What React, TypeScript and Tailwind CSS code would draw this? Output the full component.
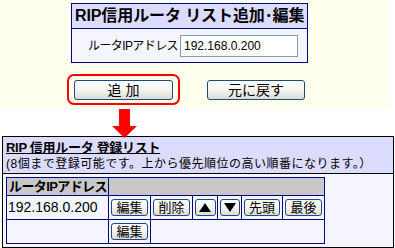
import type { ReactNode } from 'react'

// XP風ボタン
const XpButton = ({ children, className = '' }: { children: ReactNode; className?: string }) => (
  <button
    className={`flex items-center justify-center rounded-[3px] border border-[#1c4a7c] bg-linear-to-b from-white via-[#f4f4f0] to-[#dcdcd4] text-black leading-none ${className}`}
  >
    {children}
  </button>
)

const Tri = ({ down = false }: { down?: boolean }) => (
  <svg width="12" height="11" viewBox="0 0 12 11">
    <polygon points={down ? '0,1 12,1 6,10' : '6,1 12,10 0,10'} fill="#000" />
  </svg>
)

export default function App() {
  return (
    <div className="w-[395px] h-[248px] overflow-hidden bg-white text-black font-['Liberation_Sans','Noto_Sans_CJK_JP',sans-serif]">
      {/* 上部: 追加・編集フォーム */}
      <div className="w-[389px] h-[108px] bg-[#ffffee] pt-[3px]">
        <div className="ml-[71px] w-[237px] border border-[#000080]">
          <div className="h-[25px] bg-[#dcdcff] border-b border-[#000080] flex items-center pl-[3px] text-[16px] font-bold tracking-[-0.1px]">
            RIP信用ルータ リスト追加･編集
          </div>
          <div className="h-[33px] bg-[#f5f5ff] flex items-center pl-[16px]">
            <span className="w-[92px] text-[12px] tracking-[-0.6px] whitespace-nowrap">ルータIPアドレス</span>
            <input
              defaultValue="192.168.0.200"
              className="w-[118px] h-[22px] border border-[#7f9db9] bg-white px-[3px] text-[12px] outline-none"
            />
          </div>
        </div>

        <div className="mt-[11px] flex items-start">
          <div className="ml-[67px] w-[113px] h-[31px] border-2 border-[#ff0000] rounded-[7px] pl-[5px] pt-[4px]">
            <XpButton className="w-[99px] h-[20px] text-[14px]">追&nbsp;加</XpButton>
          </div>
          <XpButton className="ml-[27px] mt-[6px] w-[98px] h-[20px] text-[14px]">元に戻す</XpButton>
        </div>
      </div>

      {/* 矢印 */}
      <div className="relative z-10 h-[27px] pl-[112px]">
        <svg width="25" height="29" viewBox="0 0 25 29" className="mt-[1px]">
          <polygon points="7,0 18,0 18,17 25,17 12.5,29 0,17 7,17" fill="#ff0000" />
        </svg>
      </div>

      {/* 登録リスト */}
      <div className="ml-[2px] w-[392px] h-[112px] border border-black flex flex-col">
        <div className="h-[37px] bg-[#dcdcff] border-b border-black px-[3px] pt-[3px]">
          <div className="text-[13px] font-bold underline leading-[16px] tracking-[-0.3px]">RIP 信用ルータ 登録リスト</div>
          <div className="text-[12px] leading-[16px] tracking-[0.5px] whitespace-nowrap">(8個まで登録可能です。上から優先順位の高い順番になります。）</div>
        </div>
        <div className="flex-1 bg-[#f5f5ff] pt-[3px] pl-[3px]">
          <div className="grid w-fit grid-cols-[101px_41px_41px_24px_23px_40px_41px] grid-rows-[17px_23px_23px] gap-px p-px bg-[#000080]">
            <div className="bg-[#c8c8c8] pl-[2px] text-[13px] font-bold leading-[17px] tracking-[-0.6px] whitespace-nowrap overflow-hidden">ルータIPアドレス</div>
            <div className="col-span-6 bg-[#c8c8c8]" />

            <div className="bg-[#f5f5ff] pl-[1px] text-[14px] leading-[23px]">192.168.0.200</div>
            <div className="bg-[#f5f5ff] flex items-center justify-center">
              <XpButton className="w-[37px] h-[17px] text-[13px]">編集</XpButton>
            </div>
            <div className="bg-[#f5f5ff] flex items-center justify-center">
              <XpButton className="w-[37px] h-[17px] text-[13px]">削除</XpButton>
            </div>
            <div className="bg-[#f5f5ff] flex items-center justify-center">
              <XpButton className="w-[21px] h-[17px]"><Tri /></XpButton>
            </div>
            <div className="bg-[#f5f5ff] flex items-center justify-center">
              <XpButton className="w-[20px] h-[17px]"><Tri down /></XpButton>
            </div>
            <div className="bg-[#f5f5ff] flex items-center justify-center">
              <XpButton className="w-[36px] h-[17px] text-[13px]">先頭</XpButton>
            </div>
            <div className="bg-[#f5f5ff] flex items-center justify-center">
              <XpButton className="w-[37px] h-[17px] text-[13px]">最後</XpButton>
            </div>

            <div className="bg-[#f5f5ff]" />
            <div className="bg-[#f5f5ff] flex items-center justify-center">
              <XpButton className="w-[37px] h-[17px] text-[13px]">編集</XpButton>
            </div>
            <div className="col-span-5 bg-[#f5f5ff]" />
          </div>
        </div>
      </div>
    </div>
  )
}
